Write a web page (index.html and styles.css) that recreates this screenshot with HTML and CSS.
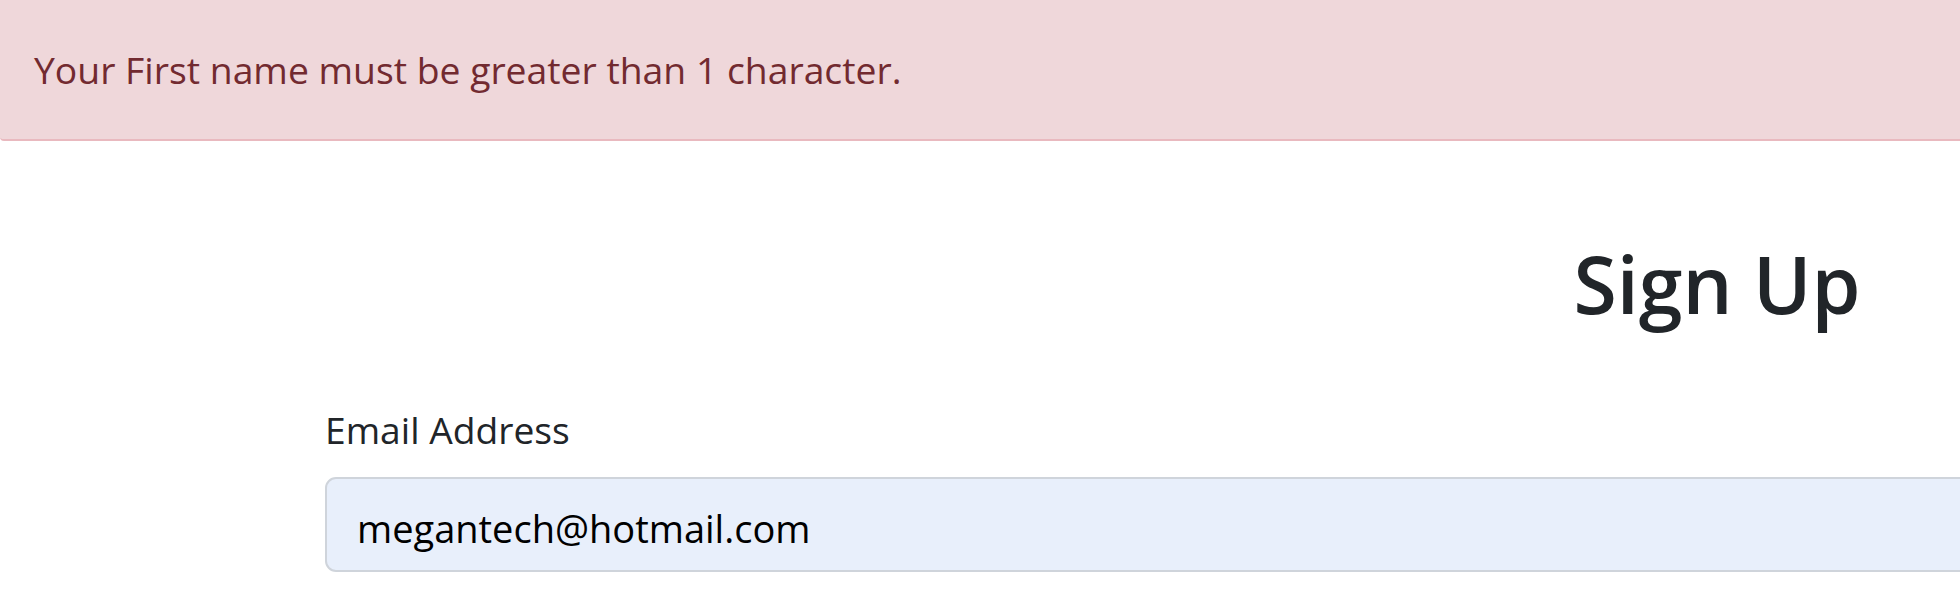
FILE: index.html
```html
<!DOCTYPE html>
<html lang="en">
<head>
<meta charset="utf-8">
<title>Sign Up</title>
<link rel="stylesheet" href="styles.css">
</head>
<body>
<div class="alert">Your First name must be greater than 1 character.</div>
<main class="page">
  <form class="signup">
    <h1 class="title">Sign Up</h1>
    <div class="field">
      <label class="label" for="email">Email Address</label>
      <input class="input" id="email" type="email" value="megantech@hotmail.com">
    </div>
  </form>
</main>
</body>
</html>
```
FILE: styles.css
```css
html, body {
  margin: 0;
  padding: 0;
  background: #ffffff;
  overflow: hidden;
  width: 1960px;
  height: 615px;
}
body {
  font-family: "Open Sans", "Noto Sans", sans-serif;
  color: #212529;
}
.alert {
  background: #efd7da;
  color: #722a30;
  border-bottom: 2px solid #e9b9bf;
  border-bottom-left-radius: 4px;
  padding: 40px 34px 39px;
  font-size: 37.3px;
  line-height: 60px;
  white-space: nowrap;
}
.page {
  padding-left: 325px;
}
.signup {
  width: 2784px;
  display: flex;
  flex-direction: column;
}
.title {
  margin: 95px 0 0;
  text-align: center;
  font-size: 78.8px;
  font-weight: 600;
  line-height: 96px;
  color: #212529;
}
.field {
  margin-top: 68px;
  display: flex;
  flex-direction: column;
  gap: 17px;
}
.label {
  font-size: 37.2px;
  line-height: 60px;
  color: #212529;
}
.input {
  box-sizing: border-box;
  height: 95px;
  width: 100%;
  padding: 6px 30px 0;
  border: 2px solid #cfd4db;
  border-radius: 11px;
  background: #e8effb;
  color: #000000;
  font-family: "Open Sans", "Noto Sans", sans-serif;
  font-size: 38px;
  outline: none;
}
```
